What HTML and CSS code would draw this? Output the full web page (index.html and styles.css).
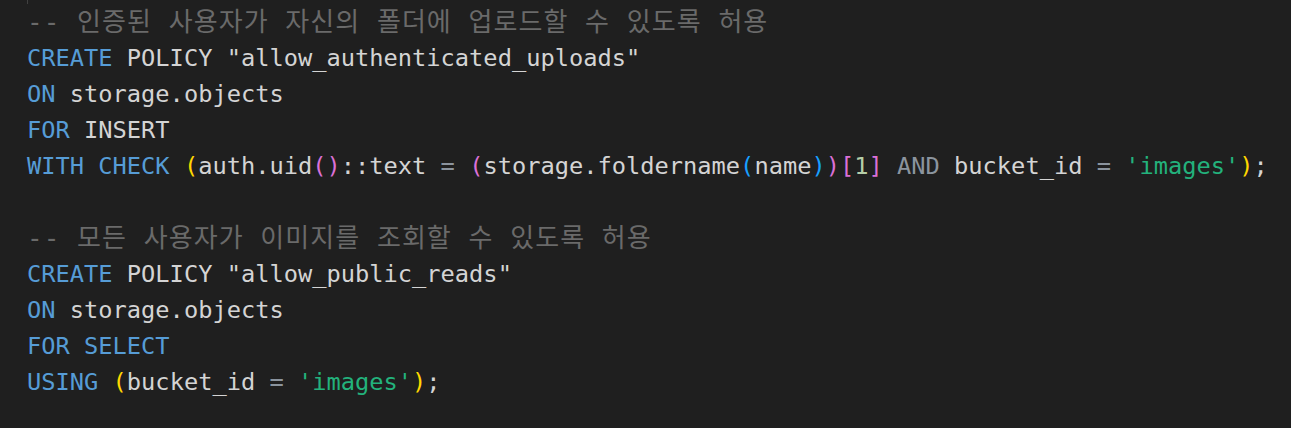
FILE: index.html
```html
<!DOCTYPE html>
<html lang="ko">
<head>
    <meta charset="UTF-8">
    <meta name="viewport" content="width=device-width, initial-scale=1.0">
    <title>storage policies</title>
    <link rel="stylesheet" href="styles.css">
</head>
<body>
    <div class="editor">
        <div class="guide"></div>
        <div class="line"><span class="comment">-- 인증된 사용자가 자신의 폴더에 업로드할 수 있도록 허용</span></div>
        <div class="line"><span class="kw">CREATE</span> POLICY "allow_authenticated_uploads"</div>
        <div class="line"><span class="kw">ON</span> storage.objects</div>
        <div class="line"><span class="kw">FOR</span> INSERT</div>
        <div class="line"><span class="kw">WITH CHECK</span> <span class="b1">(</span>auth.uid<span class="b2">()</span>::text <span class="op">=</span> <span class="b2">(</span>storage.foldername<span class="b3">(</span>name<span class="b3">)</span><span class="b2">)[</span><span class="num">1</span><span class="b2">]</span> <span class="op">AND</span> bucket_id <span class="op">=</span> <span class="str">'images'</span><span class="b1">)</span>;</div>
        <div class="line"></div>
        <div class="line"><span class="comment">-- 모든 사용자가 이미지를 조회할 수 있도록 허용</span></div>
        <div class="line"><span class="kw">CREATE</span> POLICY "allow_public_reads"</div>
        <div class="line"><span class="kw">ON</span> storage.objects</div>
        <div class="line"><span class="kw">FOR SELECT</span></div>
        <div class="line"><span class="kw">USING</span> <span class="b1">(</span>bucket_id <span class="op">=</span> <span class="str">'images'</span><span class="b1">)</span>;</div>
    </div>
</body>
</html>
```

FILE: styles.css
```css
html, body {
    margin: 0;
    height: 100%;
    background: #1f1f1f;
}
.editor {
    padding-left: 27px;
    font-family: "DejaVu Sans Mono", "Noto Sans CJK KR", monospace;
    font-size: 23.7px;
    color: #d4d4d4;
}
.guide {
    height: 4px;
    border-left: 1px solid #404040;
}
.line {
    height: 36px;
    line-height: 36px;
    white-space: pre;
}
.comment {
    color: #6a6a6a;
    font-size: 26px;
    letter-spacing: 1.05px;
}
.kw {
    color: #569cd6;
}
.op {
    color: #8b949e;
}
.str {
    color: #23b27c;
}
.num {
    color: #b5cea8;
}
.b1 {
    color: #ffd700;
}
.b2 {
    color: #da70d6;
}
.b3 {
    color: #179fff;
}
```
